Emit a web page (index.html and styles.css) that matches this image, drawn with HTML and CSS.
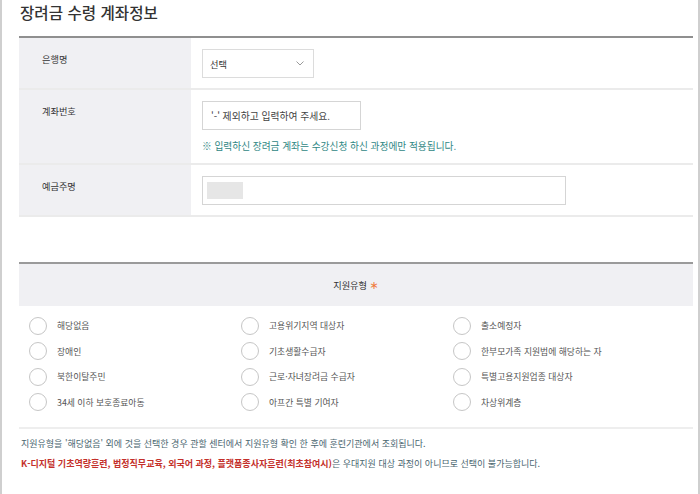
FILE: index.html
```html
<!DOCTYPE html>
<html lang="ko">
<head>
<meta charset="utf-8">
<title>장려금 수령 계좌정보</title>
<link rel="stylesheet" href="styles.css">
</head>
<body>
<div class="frame">
  <h2 class="title">장려금 수령 계좌정보</h2>
  <div class="form-table">
    <div class="row">
      <div class="label">은행명</div>
      <div class="value">
        <div class="select"><span>선택</span><svg class="chev" width="8" height="5" viewBox="0 0 8 5"><polyline points="0.5,0.5 4,4 7.5,0.5" fill="none" stroke="#9a9a9a" stroke-width="1"/></svg></div>
      </div>
    </div>
    <div class="row">
      <div class="label">계좌번호</div>
      <div class="value">
        <div class="input acct">'-' 제외하고 입력하여 주세요.</div>
        <p class="note">※ 입력하신 장려금 계좌는 수강신청 하신 과정에만 적용됩니다.</p>
      </div>
    </div>
    <div class="row">
      <div class="label">예금주명</div>
      <div class="value">
        <div class="input name"><span class="mask"></span></div>
      </div>
    </div>
  </div>

  <div class="support">
    <div class="support-head">지원유형 <span class="req">∗</span></div>
    <ul class="radio-grid">
      <li><span class="radio"></span>해당없음</li>
      <li><span class="radio"></span>고용위기지역 대상자</li>
      <li><span class="radio"></span>출소예정자</li>
      <li><span class="radio"></span>장애인</li>
      <li><span class="radio"></span>기초생활수급자</li>
      <li><span class="radio"></span>한부모가족 지원법에 해당하는 자</li>
      <li><span class="radio"></span>북한이탈주민</li>
      <li><span class="radio"></span>근로·자녀장려금 수급자</li>
      <li><span class="radio"></span>특별고용지원업종 대상자</li>
      <li><span class="radio"></span>34세 이하 보호종료아동</li>
      <li><span class="radio"></span>아프간 특별 기여자</li>
      <li><span class="radio"></span>차상위계층</li>
    </ul>
  </div>

  <div class="notice">
    <p>지원유형을 '해당없음' 외에 것을 선택한 경우 관할 센터에서 지원유형 확인 한 후에 훈련기관에서 조회됩니다.</p>
    <p><span class="red">K-디지털 기초역량훈련, 법정직무교육, 외국어 과정, 플랫폼종사자훈련(최초참여시)</span>은 우대지원 대상 과정이 아니므로 선택이 불가능합니다.</p>
  </div>
</div>
</body>
</html>
```

FILE: styles.css
```css
* { box-sizing: border-box; }

body {
  margin: 0;
  background: #fff;
  color: #333;
  font-family: "Noto Sans CJK KR", "Noto Sans", sans-serif;
}

.frame {
  height: 494px;
  border-left: 2px solid #cfcfcf;
  border-right: 2px solid #cfcfcf;
  padding: 0 5px 0 17px;
  overflow: hidden;
}

.title {
  margin: 0;
  height: 36px;
  padding-left: 1px;
  font-size: 15.6px;
  line-height: 24px;
  font-weight: 500;
  color: #333;
}

.form-table {
  border-top: 2px solid #8f8f8f;
}

.row {
  display: flex;
  border-bottom: 2px solid #ebebeb;
}

.label {
  width: 172px;
  flex: none;
  background: #f0f0f3;
  padding: 15px 0 0 23px;
  font-size: 9.2px;
  line-height: 13px;
  color: #333;
}

.value {
  flex: 1;
  padding: 11px 0 10px 11px;
}

.select {
  width: 112px;
  height: 29px;
  border: 1px solid #dcdcdc;
  display: flex;
  align-items: center;
  justify-content: space-between;
  padding: 0 9px 0 7px;
  font-size: 9.2px;
  color: #333;
}

.chev { display: block; }

.input {
  height: 29px;
  border: 1px solid #d5d5d5;
  display: flex;
  align-items: center;
  padding-left: 8px;
  font-size: 9.8px;
  color: #444;
}

.acct { width: 159px; }

.name {
  width: 364px;
  padding-left: 4px;
}

.mask {
  width: 36px;
  height: 17px;
  background: #e6e6e6;
}

.note {
  margin: 9px 0 0;
  font-size: 9.7px;
  line-height: 14px;
  color: #2f8784;
}

.support {
  margin-top: 45px;
  border-top: 2px solid #9a9a9a;
}

.support-head {
  height: 42px;
  background: #f0f0f3;
  text-align: center;
  font-size: 9.2px;
  line-height: 42px;
  color: #333;
}

.req {
  font-family: "DejaVu Sans", sans-serif;
  font-size: 11px;
  color: #ef7a3d;
}

.radio-grid {
  list-style: none;
  margin: 0;
  padding: 7px 0 0 10px;
  display: grid;
  grid-template-columns: repeat(3, 212px);
  grid-auto-rows: 25.5px;
}

.radio-grid li {
  display: flex;
  align-items: center;
  font-size: 8.8px;
  color: #555;
}

.radio {
  width: 18px;
  height: 18px;
  border: 1.5px solid #c6c6c6;
  border-radius: 50%;
  margin-right: 10px;
  flex: none;
}

.notice {
  margin-top: 12px;
  border-top: 2px solid #eeeeee;
  padding: 5px 0 0 2px;
}

.notice p {
  margin: 0;
  font-size: 9px;
  line-height: 19.7px;
  color: #4a6670;
}

.red {
  color: #c4302b;
  font-weight: 700;
}
```
